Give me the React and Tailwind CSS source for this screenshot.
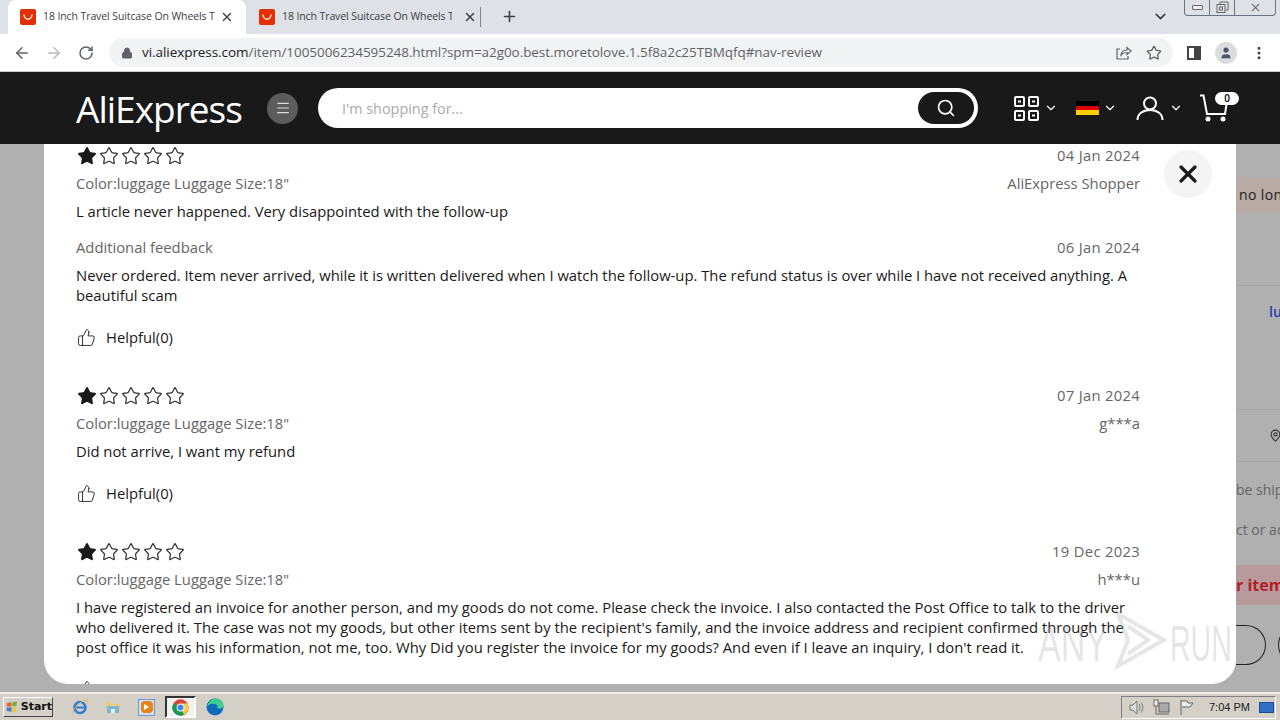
import { ArrowLeft, ArrowRight, RotateCw, Lock, Star, X, Plus, ChevronDown, ThumbsUp, Search, Menu, MoreVertical, User, MapPin } from "lucide-react";

const font = { fontFamily: '"Open Sans", sans-serif' };

function Favicon() {
  return (
    <svg width="16" height="16" viewBox="0 0 16 16" className="shrink-0">
      <rect width="16" height="16" rx="2" fill="#e62e04" />
      <path d="M4 6c.5 3 2.200 4.200 4 4.200S11.500 9 12 6" fill="none" stroke="#ffe9c9" strokeWidth="1.500" strokeLinecap="round" />
    </svg>
  );
}

function Stars() {
  return (
    <div className="flex gap-[2px] mt-[2px] ml-px">
      {[0, 1, 2, 3, 4].map((i) => (
        <Star key={i} size={20} strokeWidth={1.500} className={i === 0 ? "fill-[#191919] text-[#191919]" : "text-[#333]"} />
      ))}
    </div>
  );
}

function Row({ left, right, leftClass = "text-[#666]" }) {
  return (
    <div className="flex justify-between h-5 text-[14.8px] leading-5 mt-2 text-[#666]">
      <span className={leftClass}>{left}</span>
      <span>{right}</span>
    </div>
  );
}

function Helpful() {
  return (
    <div className="flex items-center gap-[11px] h-5 mt-[22px] text-[14.8px] leading-5 text-[#191919]">
      <ThumbsUp size={19} strokeWidth={1.250} className="text-[#333] ml-px" />
      <span className="-ml-px">Helpful(0)</span>
    </div>
  );
}

function Review({ date, user, children, top = "mt-[38px]" }) {
  return (
    <div className={top}>
      <div className="flex justify-between items-center h-5 text-[14.8px] leading-5 text-[#666]">
        <Stars />
        <span className="tracking-[0.3px]">{date}</span>
      </div>
      <Row left={'Color:luggage Luggage Size:18"'} right={user} />
      {children}
    </div>
  );
}

function Body({ children, className = "" }) {
  return <p className={`mt-2 text-[14.8px] leading-5 text-[#191919] ${className}`}>{children}</p>;
}

function TabBar() {
  return (
    <div className="flex h-[34px] bg-[#dee1e6] text-[10.5px] text-[#3c4043]" style={font}>
      <div className="flex items-center ml-2 w-[238px] h-[34px] bg-white rounded-t-lg pl-3 pr-3">
        <Favicon />
        <span className="ml-[7px] w-[174px] overflow-hidden whitespace-nowrap tracking-[-0.1px]">18 Inch Travel Suitcase On Wheels T</span>
        <X size={14} strokeWidth={2.500} className="ml-[5px] text-[#3c4043]" />
      </div>
      <div className="flex items-center w-[234px] h-[34px] pl-[13px]">
        <Favicon />
        <span className="ml-[7px] w-[170px] overflow-hidden whitespace-nowrap tracking-[-0.1px]">18 Inch Travel Suitcase On Wheels T</span>
        <X size={14} strokeWidth={2.500} className="ml-[11px]" />
      </div>
      <div className="w-px h-5 bg-[#80868b] mt-[7px]" />
      <Plus size={17} strokeWidth={2.250} className="ml-[20px] mt-2 text-[#3c4043]" />
      <ChevronDown size={17} strokeWidth={2.250} className="ml-auto mt-2 text-[#3c4043]" />
      <div className="flex ml-[15px] mr-1 w-[92px] h-4 border border-t-0 border-[#6b7280] rounded-b-[4px] text-[#555]">
        <div className="w-[25px] border-r border-[#6b7280] flex items-center justify-center">
          <div className="w-[11px] h-[5px] border border-[#666] rounded-[1px] bg-[#eef0f3]" />
        </div>
        <div className="w-[25px] border-r border-[#6b7280] flex items-center justify-center">
          <svg width="13" height="13" viewBox="0 0 13 13" fill="none" stroke="#666"><rect x="1" y="3.500" width="8" height="8" /><path d="M4 3V1h8v8h-2.500" /><rect x="3.500" y="6" width="3" height="3" /></svg>
        </div>
        <div className="flex-1 flex items-center justify-center">
          <X size={13} strokeWidth={2} className="text-[#777]" />
        </div>
      </div>
    </div>
  );
}

function Toolbar() {
  return (
    <div className="flex items-center h-[38px] bg-white border-b border-[#ccc] text-[#5f6368]" style={font}>
      <ArrowLeft size={18} strokeWidth={2} className="ml-[13px]" />
      <ArrowRight size={18} strokeWidth={2} className="ml-[14px] text-[#b6b9bd]" />
      <RotateCw size={16} strokeWidth={2.250} className="ml-[15px]" />
      <div className="flex items-center ml-[15px] w-[1064px] h-[29px] rounded-full bg-[#f1f3f4] pl-[12px] pr-[10px] text-[13.5px]">
        <Lock size={12} fill="#5f6368" strokeWidth={2} />
        <span className="ml-[9px] whitespace-nowrap tracking-[-0.06px]">
          <span className="text-[#202124]">vi.aliexpress.com</span>/item/1005006234595248.html?spm=a2g0o.best.moretolove.1.5f8a2c25TBMqfq#nav-review
        </span>
        <svg width="17" height="17" viewBox="0 0 17 17" fill="none" stroke="#5f6368" strokeWidth="1.200" className="ml-auto">
          <path d="M5 5H2v10h11v-3M6 11c.5-3.500 3-5 6-5V3.500L16 7l-4 3.500V8.500c-2.500 0-4.500.8-6 2.500z" />
        </svg>
        <Star size={16} strokeWidth={2} className="ml-[14px] mr-[1px]" />
      </div>
      <div className="ml-[14px] w-[14px] h-[14px] border-2 border-[#444] flex justify-end">
        <div className="w-[5px] bg-[#444]" />
      </div>
      <div className="ml-[14px] w-[22px] h-[22px] rounded-full bg-[#dadce0] flex items-center justify-center">
        <User size={14} fill="#4a5068" strokeWidth={1} className="text-[#4a5068]" />
      </div>
      <MoreVertical size={16} strokeWidth={2.500} className="ml-[14px] text-[#444]" />
    </div>
  );
}

function SiteHeader() {
  return (
    <div className="flex items-center h-[72px] bg-[#191919] text-white pl-[76px]" style={font}>
      <span className="w-[166px] text-[37px] leading-none tracking-[-1px] whitespace-nowrap">AliExpress</span>
      <div className="ml-[25px] w-[31px] h-[31px] rounded-full bg-[#5c5c5c] flex items-center justify-center">
        <Menu size={16} strokeWidth={1.750} className="text-[#ddd]" />
      </div>
      <div className="flex items-center justify-between ml-[20px] w-[660px] h-[40px] rounded-full bg-white pl-6 pr-1">
        <span className="text-[14.4px] text-[#aaa] mt-px">I'm shopping for...</span>
        <div className="w-[56px] h-[32px] rounded-full bg-[#191919] flex items-center justify-center">
          <Search size={20} strokeWidth={2} className="text-white" />
        </div>
      </div>
      <svg width="25" height="25" viewBox="0 0 25 25" fill="none" stroke="white" strokeWidth="2" className="ml-[36px]">
        <rect x="1" y="1" width="9" height="9" rx="1" /><rect x="15" y="1" width="9" height="9" rx="1" />
        <rect x="1" y="15" width="9" height="9" rx="1" /><rect x="15" y="15" width="9" height="9" rx="1" />
        <path d="M4 5.500h3M18 5.500h3M4 19.500h3M18 19.500h3" />
      </svg>
      <ChevronDown size={14} strokeWidth={2} className="ml-[5px]" />
      <div className="ml-[18px] w-[23px] h-[14px] flex flex-col">
        <div className="flex-1 bg-black" />
        <div className="flex-1 bg-[#dd0000]" />
        <div className="flex-1 bg-[#ffce00]" />
      </div>
      <ChevronDown size={14} strokeWidth={2} className="ml-[4px]" />
      <svg width="28" height="28" viewBox="0 0 28 28" fill="none" stroke="white" strokeWidth="2" className="ml-[19px]">
        <circle cx="14" cy="9.500" r="6" />
        <path d="M1.500 26c0-6 5-10 12.500-10s12.500 4 12.500 10" />
      </svg>
      <ChevronDown size={14} strokeWidth={2} className="ml-[5px]" />
      <div className="relative ml-[16px] w-[30px] h-[28px]">
        <svg width="30" height="28" viewBox="0 0 30 28" fill="none" stroke="white" strokeWidth="2">
          <path d="M1 1.500h3.500L8 20h18l2-13" />
          <circle cx="9" cy="25" r="1.500" fill="white" /><circle cx="24" cy="25" r="1.500" fill="white" />
        </svg>
        <span className="absolute -top-[2px] left-[16px] w-6 h-[13px] rounded-full bg-white text-black text-[10px] leading-[13px] text-center font-semibold">0</span>
      </div>
    </div>
  );
}

function Reviews() {
  return (
    <div className="w-[1192px] h-[540px] bg-white rounded-b-[24px] overflow-hidden pl-8 pr-[96px] pt-[1px]">
      <Review date="04 Jan 2024" user="AliExpress Shopper" top="">
        <Body>L article never happened. Very disappointed with the follow-up</Body>
        <div className="flex justify-between h-5 mt-4 text-[14.8px] leading-5 text-[#666]">
          <span>Additional feedback</span>
          <span className="tracking-[0.3px]">06 Jan 2024</span>
        </div>
        <Body>Never ordered. Item never arrived, while it is written delivered when I watch the follow-up. The refund status is over while I have not received anything. A beautiful scam</Body>
        <Helpful />
      </Review>
      <Review date="07 Jan 2024" user="g***a">
        <Body>Did not arrive, I want my refund</Body>
        <Helpful />
      </Review>
      <Review date="19 Dec 2023" user="h***u">
        <Body>I have registered an invoice for another person, and my goods do not come. Please check the invoice. I also contacted the Post Office to talk to the driver who delivered it. The case was not my goods, but other items sent by the recipient's family, and the invoice address and recipient confirmed through the post office it was his information, not me, too. Why Did you register the invoice for my goods? And even if I leave an inquiry, I don't read it.</Body>
        <Helpful />
      </Review>
    </div>
  );
}

function RightGutter() {
  return (
    <div className="w-[44px] h-[548px] overflow-hidden text-[14px] leading-5 whitespace-nowrap text-[#4a4a4a]">
      <div className="mt-[33px] h-[35px] bg-[#b8aaa4] pl-[3px] flex items-center text-[#222] tracking-[0.4px]">no lon</div>
      <div className="mt-[73px] h-[124px] border-t border-[#a6a6a6] pt-[16px] pl-[33px] text-[#1d47a8] font-semibold">lu</div>
      <div className="h-[52px] border-t border-[#a6a6a6] pl-[33px] flex items-center">
        <MapPin size={13} className="shrink-0 text-[#333]" />
      </div>
      <div className="border-t border-[#a6a6a6] pt-[18px] text-[#666]">be ship</div>
      <div className="mt-[20px] text-[#666]">ct or ac</div>
      <div className="mt-[25px] h-[40px] bg-[#b89a9c] flex items-center text-[#b3202a] text-[16px] font-bold">r item</div>
      <div className="flex mt-[20px] gap-[12px] -ml-[20px]">
        <div className="w-[50px] h-[40px] shrink-0 rounded-r-full border border-l-0 border-[#222]" />
        <div className="w-[50px] h-[40px] shrink-0 rounded-l-full border border-r-0 border-[#222]" />
      </div>
    </div>
  );
}

function Taskbar() {
  return (
    <div className="flex items-center h-[28px] bg-[#d4d0c8] border-t-2 border-[#ecebe6] text-[#111]" style={{ fontFamily: '"DejaVu Sans", sans-serif' }}>
      <div className="flex items-center gap-[2px] ml-[3px] w-[50px] h-[20px] bg-[#d4d0c8] border border-t-white border-l-white border-r-[#444] border-b-[#444] pl-[2px] text-[11px] font-bold">
        <svg width="16" height="16" viewBox="0 0 16 16">
          <path d="M1 3l6-1v5.500H1z" fill="#e8622c" /><path d="M8 2l6-1-1 6H8z" fill="#6cb33f" />
          <path d="M1 8.500h6V14l-6-1z" fill="#3b78d8" /><path d="M8 8.500h5l-1 6-4-.5z" fill="#f5c32c" />
        </svg>
        Start
      </div>
      <svg width="18" height="18" viewBox="0 0 18 18" fill="none" className="ml-[18px]">
        <circle cx="9" cy="9.500" r="5.500" stroke="#2b7cd3" strokeWidth="2.500" /><path d="M5 9.500h8" stroke="#2b7cd3" strokeWidth="2" />
        <path d="M2 15C1 12 9 3 15 2c2 0 1.500 2 .5 3.500" stroke="#e8b93a" strokeWidth="1" />
      </svg>
      <svg width="16" height="16" viewBox="0 0 16 16" className="ml-[16px]">
        <path d="M1 3h5l1 2h8v9H1z" fill="#e8cc7a" /><rect x="2" y="7" width="12" height="7" fill="#7db7d8" /><rect x="6" y="10" width="4" height="4" fill="#e7eef2" />
      </svg>
      <div className="ml-[17px] w-[17px] h-[17px] bg-[#cfe0f2] border border-[#6f9bd1] flex items-center justify-center">
        <div className="w-[12px] h-[12px] rounded-sm bg-[#e8841a] flex items-center justify-center">
          <div className="w-0 h-0 border-y-[3px] border-y-transparent border-l-[5px] border-l-white" />
        </div>
      </div>
      <div className="flex items-center justify-center ml-[10px] w-[31px] h-[22px] bg-[#f2f1ee] border-2 border-t-[#333] border-l-[#333] border-r-white border-b-white">
        <svg width="17" height="17" viewBox="0 0 48 48">
          <circle cx="24" cy="24" r="23" fill="#db4437" />
          <path d="M24 24L44 35A23 23 0 0 1 13 44z" fill="#0f9d58" />
          <path d="M24 24L13 44A23 23 0 0 1 4 13z" fill="#0f9d58" />
          <path d="M24 13h20a23 23 0 0 1-10 31L24 24z" fill="#ffcd40" />
          <circle cx="24" cy="24" r="11" fill="white" /><circle cx="24" cy="24" r="8.500" fill="#4285f4" />
        </svg>
      </div>
      <svg width="18" height="18" viewBox="0 0 18 18" className="ml-[10px]">
        <circle cx="9" cy="9" r="8.500" fill="#0f6cbd" />
        <path d="M1 9C2 3 7 .5 10 .5c4 0 7.500 3 7.500 7 0 2.500-2.500 3.500-5 3-1.500-.3-1.500-1.500-1-2.500C10.500 5 3 4.500 1 9z" fill="#3ecf8e" />
      </svg>
      <div className="flex items-center ml-auto mr-[4px] w-[155px] h-[23px] border border-t-[#808080] border-l-[#808080] border-r-white border-b-white pl-[6px] text-[11px] text-[#222]">
        <svg width="17" height="17" viewBox="0 0 17 17" fill="none" stroke="#777"><path d="M2 6h3l4-4v13l-4-4H2z" fill="#ddd" /><path d="M11 5c1.500 2 1.500 5 0 7M13 3.500c2.500 3 2.500 7 0 10" /></svg>
        <svg width="17" height="17" viewBox="0 0 17 17" fill="none" stroke="#666" className="ml-[8px]"><rect x="6" y="4" width="10" height="9" fill="#aaa" /><rect x="1" y="1" width="4" height="6" fill="#eee" /><path d="M3 7v8h13" /></svg>
        <svg width="17" height="17" viewBox="0 0 17 17" fill="none" stroke="#666" className="ml-[8px]"><path d="M3 1v15M3 2h6l1 2h5l-3 4H4" fill="#eee" /></svg>
        <span className="ml-[14px] whitespace-nowrap" style={{ fontFamily: '"Liberation Sans", sans-serif' }}>7:04 PM</span>
        <div className="ml-auto mr-[1px] w-[15px] h-[11px] bg-[#2f6fc4] border border-[#1b4c8e]" />
      </div>
    </div>
  );
}

export default function App() {
  return (
    <div className="relative w-[1280px] h-[720px] overflow-hidden bg-[#b0b0b0]" style={font}>
      <TabBar />
      <Toolbar />
      <SiteHeader />
      <div className="flex h-[548px] pl-[44px] bg-[#b0b0b0]">
        <Reviews />
        <RightGutter />
      </div>
      <Taskbar />

      {/* close button over the modal */}
      <div className="absolute left-[1164px] top-[150px] w-[48px] h-[48px] rounded-full bg-[#f4f4f4] flex items-center justify-center">
        <X size={28} strokeWidth={2.750} className="text-[#191919]" />
      </div>

      {/* watermark */}
      <div className="absolute left-[1038px] top-[610px] flex items-center h-[60px] text-[50px] leading-none text-[#9a9a9a]/25 pointer-events-none" style={{ fontFamily: '"Liberation Sans", sans-serif' }}>
        <span className="inline-block w-[76px] origin-left scale-x-[0.68] mt-[8px]">ANY</span>
        <svg width="54" height="60" viewBox="0 0 54 60" fill="none" stroke="#9a9a9a" strokeOpacity="0.25" strokeWidth="4">
          <path d="M4 4l46 26-46 26 10-26z" />
          <path d="M14 16l20 14-20 14" />
        </svg>
        <span className="inline-block w-[64px] ml-[2px] origin-left scale-x-[0.57] mt-[8px]">RUN</span>
      </div>
    </div>
  );
}
